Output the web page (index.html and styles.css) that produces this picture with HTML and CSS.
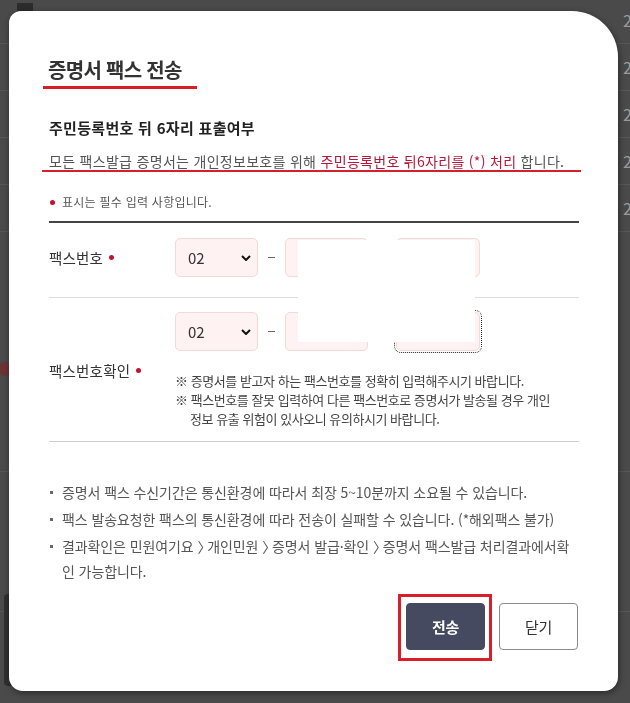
FILE: index.html
```html
<!DOCTYPE html>
<html lang="ko">
<head>
<meta charset="utf-8">
<title>증명서 팩스 전송</title>
<link rel="stylesheet" href="styles.css">
</head>
<body>
<div class="bg">
  <div class="bg-top"><span class="bg-sq"></span></div>
  <div class="bg-rows">
    <div class="bg-row"><span class="bg-num">2</span></div>
    <div class="bg-row"><span class="bg-num">2</span></div>
    <div class="bg-row"><span class="bg-num">2</span></div>
    <div class="bg-row"><span class="bg-num">2</span></div>
    <div class="bg-row"><span class="bg-num">2</span></div>
  </div>
  <div class="bg-mid"><span class="bg-circle"></span></div>
  <div class="bg-low"><span class="bg-block"></span></div>
</div>

<div class="modal">
  <h2 class="title">증명서 팩스 전송</h2>
  <h3 class="sub">주민등록번호 뒤 6자리 표출여부</h3>
  <p class="notice">모든 팩스발급 증명서는 개인정보보호를 위해 <em>주민등록번호 뒤6자리를 (*) 처리</em> 합니다.</p>
  <p class="req"><span class="dot"></span>표시는 필수 입력 사항입니다.</p>

  <div class="form">
    <div class="row row-first">
      <div class="label">팩스번호<span class="dot"></span></div>
      <div class="field">
        <div class="inputs">
          <div class="sel"><span>02</span><svg class="chev" width="10" height="6" viewBox="0 0 10 6"><path d="M1 1 L5 5 L9 1" fill="none" stroke="#111" stroke-width="2"/></svg></div>
          <span class="dash"></span>
          <div class="inp"></div>
          <span class="dash"></span>
          <div class="inp"></div>
        </div>
      </div>
    </div>
    <div class="row row-second">
      <div class="label">팩스번호확인<span class="dot"></span></div>
      <div class="field">
        <div class="inputs">
          <div class="sel"><span>02</span><svg class="chev" width="10" height="6" viewBox="0 0 10 6"><path d="M1 1 L5 5 L9 1" fill="none" stroke="#111" stroke-width="2"/></svg></div>
          <span class="dash"></span>
          <div class="inp"></div>
          <span class="dash"></span>
          <div class="inp focus"></div>
        </div>
        <div class="notes">
          <p>※ 증명서를 받고자 하는 팩스번호를 정확히 입력해주시기 바랍니다.</p>
          <p>※ 팩스번호를 잘못 입력하여 다른 팩스번호로 증명서가 발송될 경우 개인정보 유출 위험이 있사오니 유의하시기 바랍니다.</p>
        </div>
      </div>
    </div>
  </div>

  <ul class="info">
    <li>증명서 팩스 수신기간은 통신환경에 따라서 최장 5~10분까지 소요될 수 있습니다.</li>
    <li>팩스 발송요청한 팩스의 통신환경에 따라 전송이 실패할 수 있습니다. (*해외팩스 불가)</li>
    <li>결과확인은 민원여기요 <span class="gt">〉</span> 개인민원 <span class="gt">〉</span> 증명서 발급·확인 <span class="gt">〉</span> 증명서 팩스발급 처리결과에서확인 가능합니다.</li>
  </ul>

  <div class="btns">
    <span class="mark"><button class="btn send">전송</button></span>
    <button class="btn close">닫기</button>
  </div>

  <div class="redact"></div>
</div>
</body>
</html>
```

FILE: styles.css
```css
* { box-sizing: border-box; }
html, body { margin: 0; padding: 0; }
body {
  width: 630px;
  height: 703px;
  overflow: hidden;
  background: #4a4a4a;
  font-family: "Noto Sans CJK KR", "Noto Sans", sans-serif;
}

/* background page (dimmed) */
.bg { position: relative; height: 703px; }
.bg-top { height: 11px; position: relative; }
.bg-sq { position: absolute; left: 17px; top: 3px; width: 16px; height: 8px; background: #2c2c2c; }
.bg-rows { margin-top: -14px; }
.bg-row {
  height: 47px;
  border-bottom: 1px solid #575757;
  display: flex;
  align-items: center;
  justify-content: flex-end;
}
.bg-num { color: #9a9a9a; font-size: 16px; margin-right: -2px; }
.bg-mid { height: 240px; position: relative; border-bottom: 1px solid #575757; }
.bg-circle { position: absolute; left: -2px; top: 130px; width: 14px; height: 14px; border-radius: 50%; background: #6a3434; }
.bg-low { position: relative; height: 140px; border-bottom: 1px solid #575757; }
.bg-block { position: absolute; left: 4px; top: 122px; width: 30px; height: 92px; background: #2f2f2f; border-radius: 4px; }

/* modal */
.modal {
  position: fixed;
  left: 9px;
  top: 11px;
  width: 609px;
  background: #fff;
  border-radius: 12px 46px 14px 14px;
  padding: 0 39px 41px 40px;
  box-shadow: 1px 2px 6px rgba(0, 0, 0, 0.45);
}

.title {
  width: fit-content;
  margin: 45px 0 0 -6px;
  padding: 0 15px 2px 5px;
  border-bottom: 3px solid #d4202a;
  font-size: 20px;
  line-height: 28px;
  font-weight: 700;
  color: #333;
  letter-spacing: -0.7px;
}

.sub {
  margin: 28px 0 0;
  font-size: 15px;
  line-height: 22px;
  font-weight: 700;
  color: #222;
  letter-spacing: 0.3px;
}

.notice {
  margin: 13px -2px 0 -7px;
  padding: 0 2px 0 7px;
  border-bottom: 2px solid #d4202a;
  font-size: 14px;
  line-height: 18px;
  color: #555;
  letter-spacing: 0.3px;
  white-space: nowrap;
}
.notice em { font-style: normal; color: #b8173a; }

.req {
  margin: 21px 0 0;
  font-size: 12px;
  line-height: 18px;
  color: #555;
  letter-spacing: 0.25px;
  display: flex;
  align-items: center;
}
.req .dot { margin: 0 7px 0 1px; }

.dot {
  display: inline-block;
  width: 5px;
  height: 5px;
  border-radius: 50%;
  background: #c8102e;
  vertical-align: middle;
}

.form { margin-top: 10px; border-top: 2px solid #444; }
.row {
  display: flex;
  align-items: center;
  border-bottom: 1px solid #dcdcdc;
}
.row-first { padding: 15px 0 20px; }
.row-second { padding: 14px 0 13px; border-bottom-color: #cfcfcf; }

.label {
  flex: none;
  width: 126px;
  font-size: 14.5px;
  color: #333;
  letter-spacing: 0.2px;
  display: flex;
  align-items: center;
}
.label .dot { margin-left: 6px; }

.field { flex: 1; }
.inputs { display: flex; align-items: center; }
.sel, .inp {
  height: 39px;
  border: 1px solid #f4d9d9;
  background: #fff2f2;
  border-radius: 5px;
}
.sel {
  width: 83px;
  display: flex;
  align-items: center;
  justify-content: space-between;
  padding: 0 6px 0 12px;
  font-size: 15px;
  color: #333;
}
.chev { display: block; }
.inp { width: 83px; }
.inp:last-child { width: 84px; }
.dash {
  width: 27px;
  display: flex;
  justify-content: center;
}
.dash::before { content: ""; width: 7px; height: 1px; background: #666; }
.dash + .inp + .dash { width: 28px; }
.focus { outline: 1px dotted #222; outline-offset: 1px; }

.notes { margin-top: 20px; padding-right: 20px; }
.notes p {
  margin: 0;
  padding-left: 15px;
  text-indent: -15px;
  font-size: 13px;
  line-height: 19px;
  color: #444;
  letter-spacing: -0.45px;
}

.info {
  list-style: none;
  margin: 38px 3px 0 0;
  padding: 0;
}
.info li {
  position: relative;
  padding-left: 13px;
  font-size: 14px;
  line-height: 25px;
  color: #555;
  letter-spacing: -0.1px;
}
.info li + li { margin-top: 2px; }
.info li::before {
  content: "";
  position: absolute;
  left: 1px;
  top: 11px;
  width: 3px;
  height: 3px;
  background: #666;
}
.gt { letter-spacing: -8px; }

.btns {
  margin-top: 19px;
  display: flex;
  justify-content: flex-end;
  align-items: flex-start;
  gap: 14px;
}
.mark {
  display: block;
  border: 3px solid #d81e28;
  padding: 6px 4px 8px 5px;
  margin: -9px -7px -11px -8px;
}
.btn {
  display: block;
  width: 79px;
  height: 47px;
  border-radius: 4px;
  font-family: inherit;
  font-size: 15px;
  letter-spacing: -0.3px;
  cursor: pointer;
}
.send {
  background: #454a60;
  border: 1px solid #454a60;
  color: #fff;
  font-weight: 700;
}
.close {
  background: #fff;
  border: 1px solid #8a8a8a;
  color: #333;
  margin-right: 1px;
}

.redact {
  position: absolute;
  left: 289px;
  top: 229px;
  width: 177px;
  height: 102px;
  background: #fff;
}
```
